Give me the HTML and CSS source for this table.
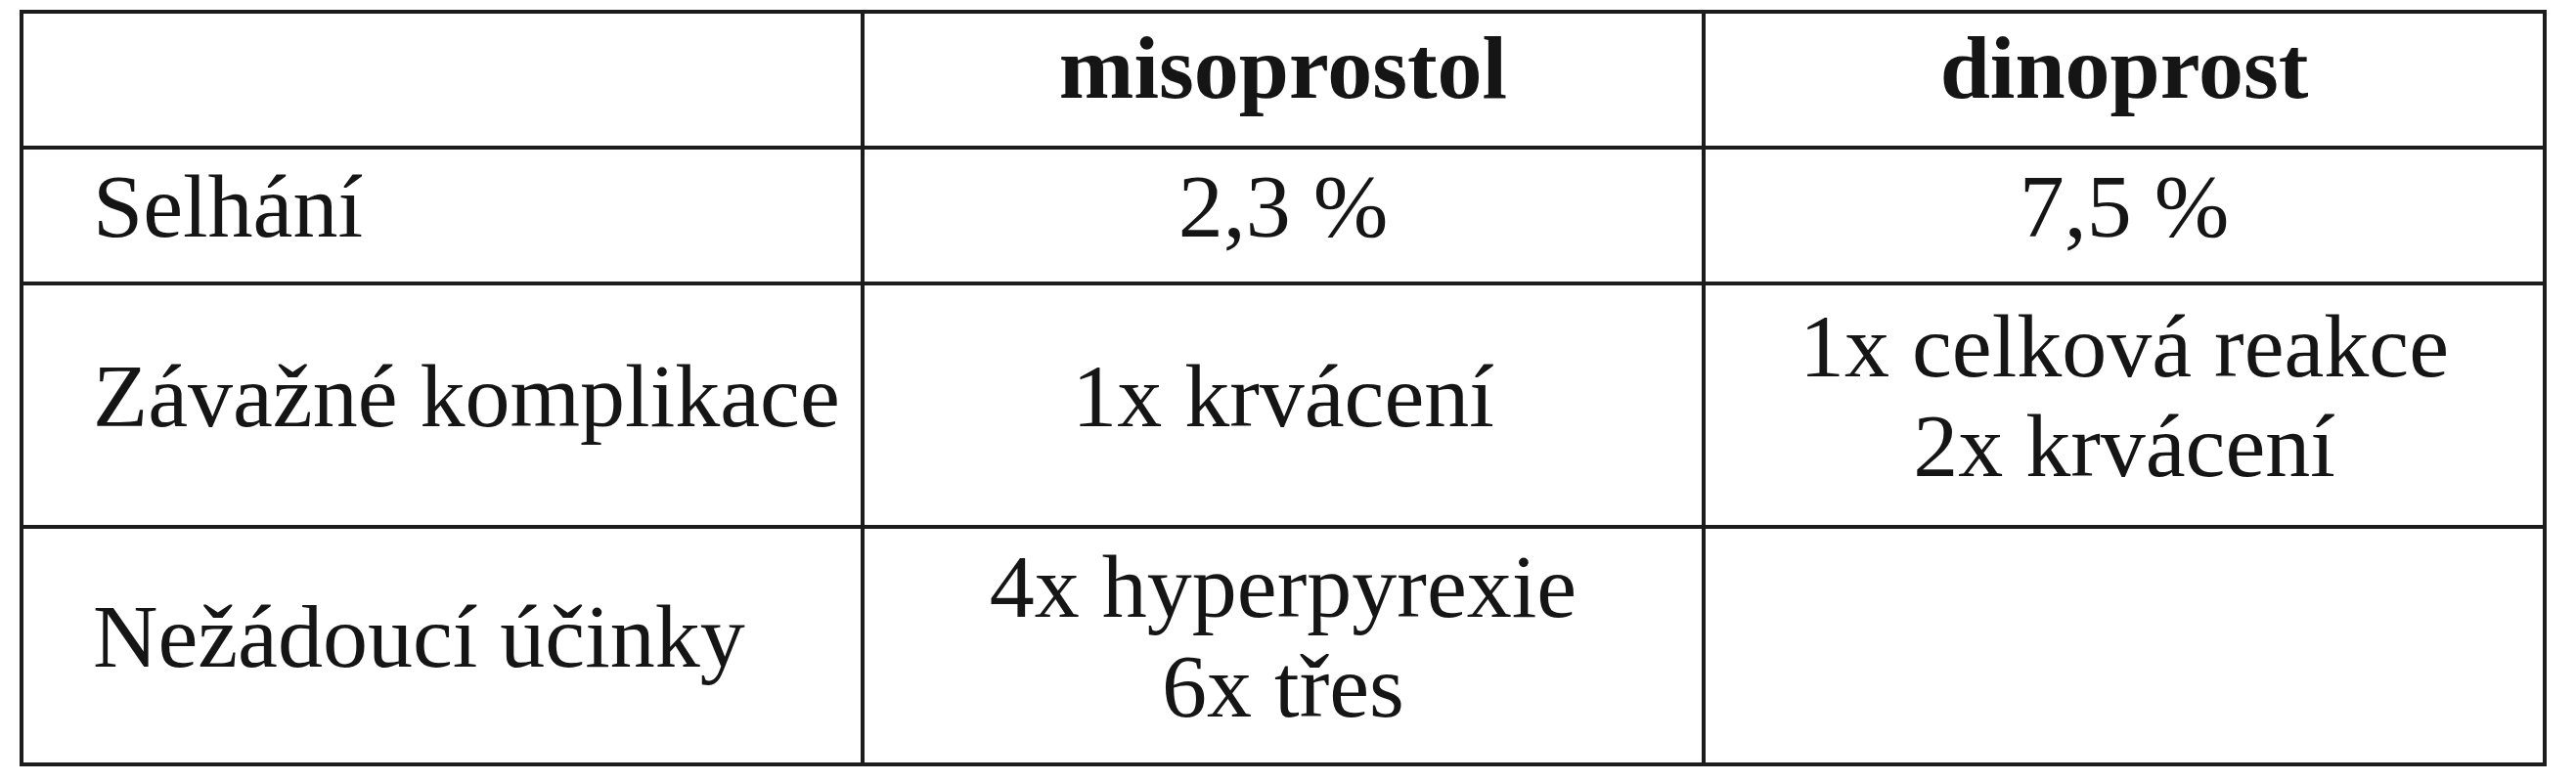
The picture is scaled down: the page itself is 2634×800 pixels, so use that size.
FILE: index.html
```html
<!DOCTYPE html>
<html lang="cs">
<head>
<meta charset="utf-8">
<title>Tabulka</title>
<link rel="stylesheet" href="styles.css">
</head>
<body>
<div class="page">
  <table class="results">
    <tbody>
      <tr class="row-head">
        <td class="label"></td>
        <td class="val head">misoprostol</td>
        <td class="val head">dinoprost</td>
      </tr>
      <tr class="row-a">
        <td class="label">Selhání</td>
        <td class="val">2,3 %</td>
        <td class="val">7,5 %</td>
      </tr>
      <tr class="row-b">
        <td class="label">Závažné komplikace</td>
        <td class="val">1x krvácení</td>
        <td class="val">1x celková reakce<br>2x krvácení</td>
      </tr>
      <tr class="row-c">
        <td class="label">Nežádoucí účinky</td>
        <td class="val">4x hyperpyrexie<br>6x třes</td>
        <td class="val"></td>
      </tr>
    </tbody>
  </table>
</div>
</body>
</html>
```

FILE: styles.css
```css
html, body {
  margin: 0;
  padding: 0;
  background: #ffffff;
}

.page {
  padding: 10px 0 0 20px;
}

.results {
  width: 2584px;
  table-layout: fixed;
  border-collapse: separate;
  border-spacing: 0;
  border-top: 4px solid #1c1c1c;
  border-left: 4px solid #1c1c1c;
  font-family: "Liberation Serif", "Times New Roman", serif;
  font-size: 92px;
  line-height: 102px;
  color: #151515;
}

.results td {
  border-right: 4px solid #1c1c1c;
  border-bottom: 4px solid #1c1c1c;
  vertical-align: middle;
  padding: 0 0 20px 0;
  white-space: nowrap;
}

.results td.label {
  text-align: left;
  padding-left: 71px;
}

.results td.val {
  text-align: center;
}

.results td.head {
  font-weight: bold;
  padding-bottom: 26px;
}

.row-head { height: 139px; }
.row-a { height: 139px; }
.row-b { height: 249px; }
.row-c { height: 243px; }
```
